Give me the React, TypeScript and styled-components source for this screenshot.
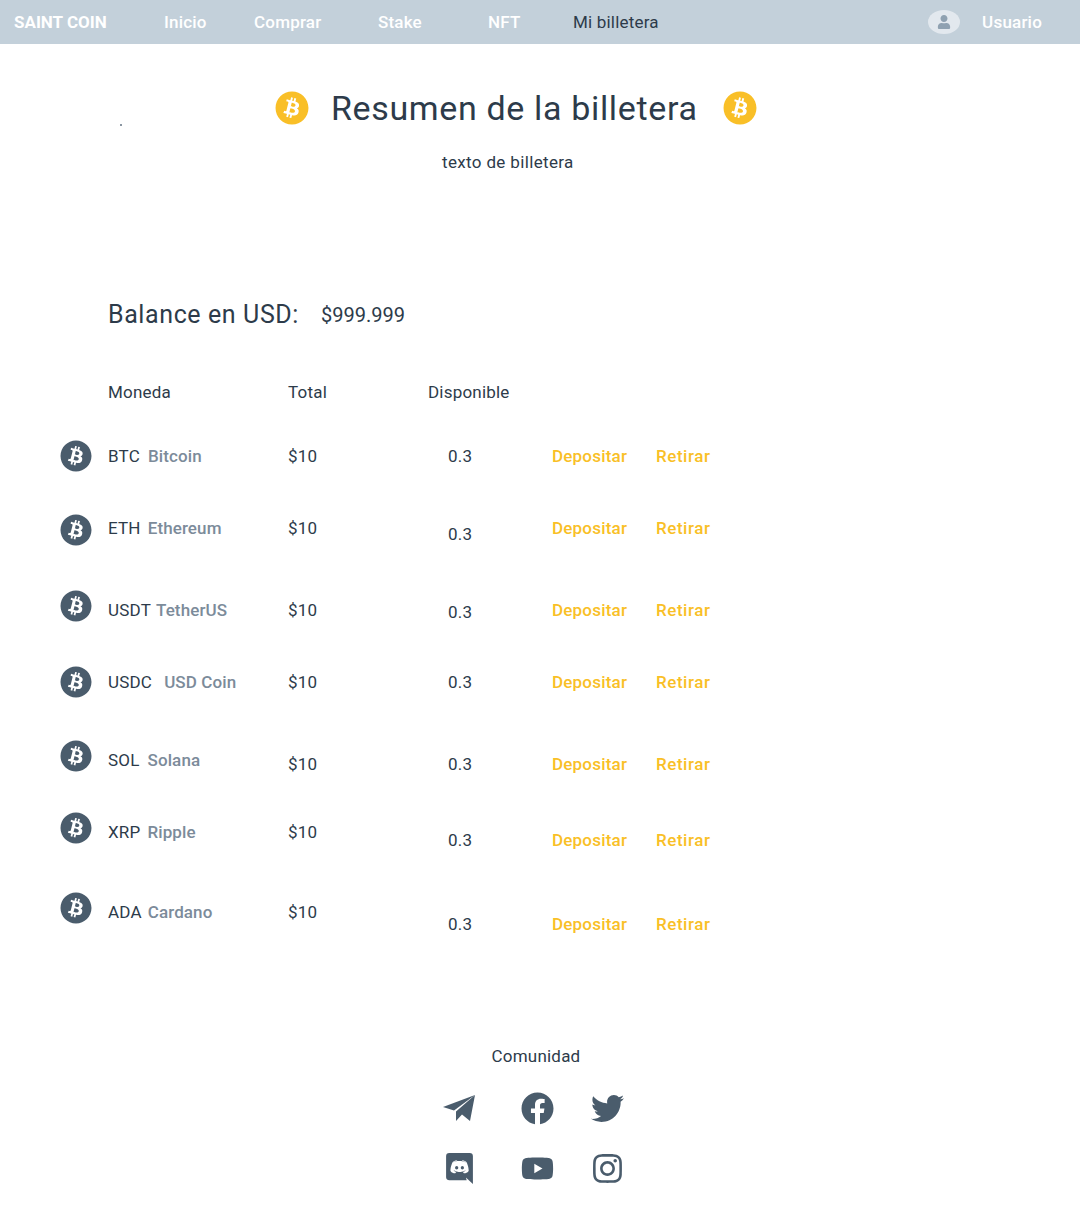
import styled, { createGlobalStyle } from "styled-components";
import { FaBitcoin, FaFacebook, FaInstagram, FaTwitter, FaUser, FaYoutube } from "react-icons/fa";
import { IoLogoDiscord } from "react-icons/io5";

const GlobalStyle = createGlobalStyle`
    html, body {
        margin: 0;
        padding: 0;
        background: #ffffff;
        color: #2d3b4a;
        font-family: "Roboto", "Liberation Sans", sans-serif;
        font-size: 17px;
        letter-spacing: 0.2px;
    }
`;

const Page = styled.div`
    width: 1080px;
    height: 1212px;
    overflow: hidden;
`;

const NavBar = styled.nav`
    height: 44px;
    background: #c3d0da;
    display: flex;
    align-items: center;
    padding-left: 14px;
`;

const Brand = styled.span`
    width: 150px;
    color: #ffffff;
    font-weight: 700;
    letter-spacing: 0;
`;

const NavLink = styled.a<{ $width: number; $active?: boolean }>`
    width: ${({ $width }) => $width}px;
    color: ${({ $active }) => ($active ? "#2d3b4a" : "#ffffff")};
    font-weight: ${({ $active }) => ($active ? 400 : 500)};
`;

const UserArea = styled.div`
    margin-left: auto;
    margin-right: 38px;
    display: flex;
    align-items: center;
    gap: 22px;
    color: #ffffff;
    font-weight: 500;
`;

const Avatar = styled.span`
    width: 32px;
    height: 24px;
    border-radius: 50%;
    background: #e2e8ee;
    color: #8fa1b1;
    display: flex;
    align-items: center;
    justify-content: center;
    font-size: 14px;
`;

const Hero = styled.header`
    position: relative;
    height: 146px;
`;

const Speck = styled.i`
    position: absolute;
    left: 120px;
    top: 80px;
    width: 2px;
    height: 2px;
    background: #8b97a3;
`;

const TitleRow = styled.div`
    display: flex;
    align-items: center;
    height: 128px;
    padding-left: 275px;
    color: #f9bf27;
    font-size: 34px;
`;

const Title = styled.h1`
    margin: 0 26px 0 22px;
    width: 366px;
    color: #2d3b4a;
    font-size: 34px;
    font-weight: 400;
    letter-spacing: 0.65px;
    white-space: nowrap;
`;

const Subtitle = styled.p`
    margin: -20px 0 0 442px;
    letter-spacing: 0.35px;
`;

const Balance = styled.section`
    margin-top: 110px;
    padding-left: 108px;
    display: flex;
    align-items: center;
    gap: 22px;
`;

const BalanceLabel = styled.h2`
    margin: 0;
    font-size: 25px;
    font-weight: 400;
    letter-spacing: 0.6px;
`;

const BalanceValue = styled.span`
    font-size: 20px;
    letter-spacing: 0;
`;

const TableGrid = styled.div`
    display: grid;
    grid-template-columns: 48px 180px 140px 124px 104px 80px;
    padding-left: 60px;
`;

const HeadRow = styled(TableGrid)`
    margin-top: 53px;
    height: 58px;
    grid-template-columns: 180px 140px 124px;
    padding-left: 108px;
`;

const Row = styled(TableGrid)<{ $height: number }>`
    height: ${({ $height }) => $height}px;
    align-items: start;
    line-height: 20px;
`;

const Cell = styled.div<{ $top: number; $indent?: number }>`
    margin-top: ${({ $top }) => $top}px;
    padding-left: ${({ $indent }) => $indent ?? 0}px;
    white-space: nowrap;
`;

const CoinIcon = styled(Cell)`
    height: 32px;
    font-size: 32px;
    line-height: 0;
    color: #4a5c6c;
`;

const CoinName = styled.span<{ $gap: number }>`
    margin-left: ${({ $gap }) => $gap}px;
    color: #7c8b9a;
    font-weight: 500;
    letter-spacing: 0.1px;
`;

const Action = styled(Cell)<{ $spacing: number }>`
    color: #f9bf27;
    font-weight: 500;
    letter-spacing: ${({ $spacing }) => $spacing}px;
`;

const Community = styled.footer`
    margin-top: 78px;
    display: flex;
    flex-direction: column;
    align-items: center;
    padding-right: 8px;
`;

const SocialGrid = styled.div`
    margin-top: 26px;
    padding-right: 6px;
    display: grid;
    grid-template-columns: 78px 70px 32px;
    grid-auto-rows: 60px;
    color: #4a5c6c;
    font-size: 33px;
    line-height: 0;
`;

const coins = [
    { code: "BTC", name: "Bitcoin", gap: 8, height: 72, icon: 0, text: 6, total: 6, qty: 6, act: 6 },
    { code: "ETH", name: "Ethereum", gap: 7, height: 78, icon: 2, text: 6, total: 6, qty: 12, act: 6 },
    { code: "USDT", name: "TetherUS", gap: 5, height: 76, icon: 0, text: 10, total: 10, qty: 12, act: 10 },
    { code: "USDC", name: "USD Coin", gap: 12, height: 74, icon: 0, text: 6, total: 6, qty: 6, act: 6 },
    { code: "SOL", name: "Solana", gap: 8, height: 72, icon: 0, text: 10, total: 14, qty: 14, act: 14 },
    { code: "XRP", name: "Ripple", gap: 7, height: 80, icon: 0, text: 10, total: 10, qty: 18, act: 18 },
    { code: "ADA", name: "Cardano", gap: 6, height: 76, icon: 0, text: 10, total: 10, qty: 22, act: 22 },
];

const TelegramIcon = () => (
    <svg width="32" height="32" viewBox="0 0 32 32" fill="currentColor">
        <path d="M32 3 0 15l11 3.5z" />
        <path d="M32 3 13 19.5V29l6-6.5 8 6.5z" />
    </svg>
);

export default function App() {
    return (
        <Page>
            <GlobalStyle />
            <NavBar>
                <Brand>SAINT COIN</Brand>
                <NavLink $width={90}>Inicio</NavLink>
                <NavLink $width={124}>Comprar</NavLink>
                <NavLink $width={110}>Stake</NavLink>
                <NavLink $width={85}>NFT</NavLink>
                <NavLink $width={110} $active>Mi billetera</NavLink>
                <UserArea>
                    <Avatar><FaUser /></Avatar>
                    Usuario
                </UserArea>
            </NavBar>
            <Hero>
                <Speck />
                <TitleRow>
                    <FaBitcoin />
                    <Title>Resumen de la billetera</Title>
                    <FaBitcoin />
                </TitleRow>
                <Subtitle>texto de billetera</Subtitle>
            </Hero>
            <Balance>
                <BalanceLabel>Balance en USD:</BalanceLabel>
                <BalanceValue>$999.999</BalanceValue>
            </Balance>
            <HeadRow>
                <span>Moneda</span>
                <span>Total</span>
                <span>Disponible</span>
            </HeadRow>
            {coins.map((c) => (
                <Row key={c.code} $height={c.height}>
                    <CoinIcon $top={c.icon}><FaBitcoin /></CoinIcon>
                    <Cell $top={c.text}>
                        {c.code}
                        <CoinName $gap={c.gap}>{c.name}</CoinName>
                    </Cell>
                    <Cell $top={c.total}>$10</Cell>
                    <Cell $top={c.qty} $indent={20}>0.3</Cell>
                    <Action $top={c.act} $spacing={0.2}>Depositar</Action>
                    <Action $top={c.act} $spacing={0.55}>Retirar</Action>
                </Row>
            ))}
            <Community>
                Comunidad
                <SocialGrid>
                    <TelegramIcon />
                    <FaFacebook />
                    <FaTwitter />
                    <IoLogoDiscord />
                    <FaYoutube />
                    <FaInstagram />
                </SocialGrid>
            </Community>
        </Page>
    );
}
